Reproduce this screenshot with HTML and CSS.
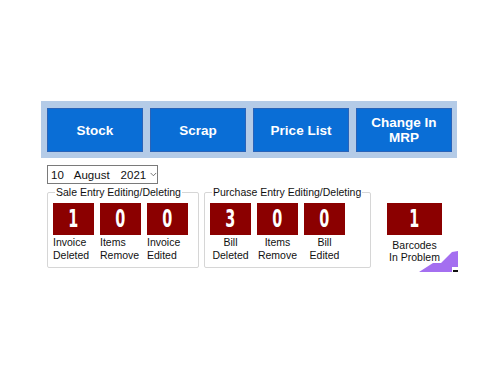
FILE: index.html
```html
<!DOCTYPE html>
<html lang="en">
<head>
    <meta charset="UTF-8">
    <meta name="viewport" content="width=device-width, initial-scale=1.0">
    <title>Dashboard</title>
    <link rel="stylesheet" href="styles.css">
</head>
<body>
    <div class="screen">
        <div class="toolbar">
            <button class="tool-btn">Stock</button>
            <button class="tool-btn">Scrap</button>
            <button class="tool-btn">Price List</button>
            <button class="tool-btn">Change In<br>MRP</button>
        </div>

        <div class="date-picker">
            <span class="d-day">10</span>
            <span class="d-month">August</span>
            <span class="d-year">2021</span>
            <svg class="d-arrow" width="11" height="7" viewBox="0 0 11 7"><path d="M1 1 L5.5 5.5 L10 1" fill="none" stroke="#444" stroke-width="1.2"/></svg>
        </div>

        <div class="panels">
            <div class="group sale">
                <span class="group-title">Sale Entry Editing/Deleting</span>
                <div class="counters">
                    <div class="counter">
                        <div class="count"><span>1</span></div>
                        <div class="caption">Invoice<br>Deleted</div>
                    </div>
                    <div class="counter">
                        <div class="count"><span>0</span></div>
                        <div class="caption">Items<br>Remove</div>
                    </div>
                    <div class="counter">
                        <div class="count"><span>0</span></div>
                        <div class="caption">Invoice<br>Edited</div>
                    </div>
                </div>
            </div>

            <div class="group purchase">
                <span class="group-title">Purchase Entry Editing/Deleting</span>
                <div class="counters">
                    <div class="counter">
                        <div class="count"><span>3</span></div>
                        <div class="caption">Bill<br>Deleted</div>
                    </div>
                    <div class="counter">
                        <div class="count"><span>0</span></div>
                        <div class="caption">Items<br>Remove</div>
                    </div>
                    <div class="counter">
                        <div class="count"><span>0</span></div>
                        <div class="caption">Bill<br>Edited</div>
                    </div>
                </div>
            </div>

            <div class="counter barcode">
                <div class="count"><span>1</span></div>
                <div class="caption">Barcodes<br>In Problem</div>
            </div>
        </div>

        <svg class="corner-shape" width="40" height="25" viewBox="418 250 40 25">
            <polygon points="419,272 433,263 441,263 452,252 458,251 458,267 452,267 452,272" fill="#a46ff0"/>
            <rect x="453" y="270" width="5" height="2" fill="#111"/>
        </svg>
    </div>
</body>
</html>
```

FILE: styles.css
```css
body {
    margin: 0;
    padding: 0;
    background: #ffffff;
    font-family: "Liberation Sans", Arial, sans-serif;
    color: #111;
}

.screen {
    position: relative;
    width: 500px;
    height: 375px;
    padding: 101px 0 0 41px;
    box-sizing: border-box;
}

.toolbar {
    display: grid;
    grid-template-columns: repeat(4, 96px);
    column-gap: 7px;
    width: 416px;
    height: 57px;
    padding: 7px 5px 6px 6px;
    box-sizing: border-box;
    background-color: #b4cbe7;
}

.tool-btn {
    height: 44px;
    padding: 0;
    background-color: #0a6ed6;
    border: 1px solid #2a63b8;
    color: #ffffff;
    font-family: "Liberation Sans", Arial, sans-serif;
    font-weight: bold;
    font-size: 13.5px;
    line-height: 15px;
    cursor: pointer;
}

.date-picker {
    display: flex;
    align-items: center;
    width: 111px;
    height: 19px;
    margin: 7px 0 0 6px;
    padding-left: 3px;
    box-sizing: border-box;
    border: 1px solid #7a7a7a;
    font-size: 11.5px;
}

.d-month {
    margin-left: 10px;
}

.d-year {
    margin-left: 11px;
}

.d-arrow {
    margin-left: 4px;
}

.panels {
    display: flex;
    align-items: flex-start;
    margin: 8px 0 0 6px;
}

.group {
    position: relative;
    height: 76px;
    box-sizing: border-box;
    border: 1px solid #d6d6d6;
    border-radius: 2px;
}

.sale {
    width: 152px;
}

.purchase {
    width: 167px;
    margin-left: 5px;
}

.group-title {
    position: absolute;
    top: -8px;
    left: 7px;
    padding: 0 1px;
    background: #ffffff;
    font-size: 10.5px;
    line-height: 14px;
    white-space: nowrap;
}

.counters {
    display: flex;
    gap: 6px;
    padding: 10px 0 0 5px;
}

.counter {
    width: 41px;
}

.count {
    height: 32px;
    background-color: #8b0000;
    color: #ffffff;
    font-family: "DejaVu Sans", sans-serif;
    font-weight: bold;
    font-size: 24px;
    line-height: 32px;
    text-align: center;
}

.count span {
    display: inline-block;
    transform: scaleX(0.6);
}

.caption {
    margin-top: 1px;
    font-size: 10.5px;
    line-height: 13px;
    white-space: nowrap;
}

.purchase .caption {
    text-align: center;
}

.barcode {
    width: 55px;
    margin: 11px 0 0 16px;
}

.barcode .caption {
    margin-top: 4px;
    margin-left: -10px;
    width: 75px;
    text-align: center;
    line-height: 12px;
}

.corner-shape {
    position: absolute;
    left: 418px;
    top: 250px;
}
```
